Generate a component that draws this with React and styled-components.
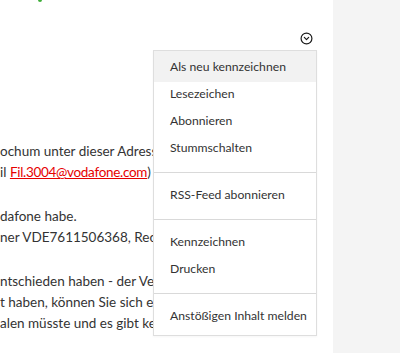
import React from "react";
import styled, { createGlobalStyle } from "styled-components";
import { CircleChevronDown } from "lucide-react";

const GlobalStyle = createGlobalStyle`
  html, body {
    margin: 0;
    padding: 0;
    background: #ffffff;
    font-family: Lato, "Open Sans", sans-serif;
    color: #333333;
  }
`;

const menuSections = [
  ["Als neu kennzeichnen", "Lesezeichen", "Abonnieren", "Stummschalten"],
  ["RSS-Feed abonnieren"],
  ["Kennzeichnen", "Drucken"],
  ["Anstößigen Inhalt melden"],
];

function App() {
  return (
    <Page>
      <GlobalStyle />
      <Main>
        <StatusMark />
        <Toolbar>
          <MenuAnchor>
            <IconButton aria-label="Optionen">
              <CircleChevronDown size={13} strokeWidth={2.2} />
            </IconButton>
            <Menu>
              {menuSections.map((items, i) => (
                <Section key={i} $first={i === 0} $last={i === menuSections.length - 1}>
                  {items.map((label, j) => (
                    <Item key={label} $active={i === 0 && j === 0}>
                      {label}
                    </Item>
                  ))}
                </Section>
              ))}
            </Menu>
          </MenuAnchor>
        </Toolbar>
        <Body>
          <Para>
            <Line>ochum unter dieser Adresse</Line>
            <Line>
              il <Mail href="#">Fil.3004@vodafone.com</Mail>) :
            </Line>
          </Para>
          <Para>
            <Line>dafone habe.</Line>
            <Line>ner VDE7611506368, Rechn</Line>
          </Para>
          <Para>
            <Line>ntschieden haben - der Vertr</Line>
            <Line>t haben, können Sie sich ein</Line>
            <Line>alen müsste und es gibt kein</Line>
          </Para>
        </Body>
      </Main>
      <Sidebar />
    </Page>
  );
}

export default App;

const Page = styled.div`
  display: flex;
  height: 100vh;
  overflow: hidden;
`;

const Main = styled.div`
  flex: 1;
  min-width: 0;
  background: #ffffff;
`;

const Sidebar = styled.aside`
  width: 67px;
  flex-shrink: 0;
  background: #f4f4f4;
`;

const StatusMark = styled.span`
  display: block;
  width: 4px;
  height: 2px;
  margin-left: 38px;
  border-radius: 0 0 2px 2px;
  background: #3fae3a;
`;

const Toolbar = styled.div`
  display: flex;
  justify-content: flex-end;
  padding: 30px 20px 0 0;
`;

const MenuAnchor = styled.div`
  position: relative;
  z-index: 2;
`;

const IconButton = styled.button`
  display: block;
  width: 13px;
  height: 13px;
  padding: 0;
  border: 0;
  background: none;
  color: #1a1a1a;
  cursor: pointer;
  svg {
    display: block;
  }
`;

const Menu = styled.div`
  position: absolute;
  top: calc(100% + 5px);
  right: -4px;
  width: 164px;
  box-sizing: border-box;
  background: #ffffff;
  border: 1px solid #dedede;
  box-shadow: 0 1px 2px rgba(0, 0, 0, 0.04);
`;

const Section = styled.div`
  padding: ${(p) => (p.$first ? "0" : "10px")} 0 ${(p) => (p.$last ? "4px" : "9px")};
  & + & {
    border-top: 1px solid #d9d9d9;
  }
`;

const Item = styled.div`
  box-sizing: border-box;
  height: ${(p) => (p.$active ? "31px" : "27px")};
  line-height: 24px;
  padding: ${(p) => (p.$active ? "4px" : "0")} 0 0 16px;
  background: ${(p) => (p.$active ? "#f2f2f2" : "transparent")};
  font-size: 12.2px;
  color: #333333;
  white-space: nowrap;
  cursor: pointer;
`;

const Body = styled.div`
  padding-top: 96px;
`;

const Para = styled.p`
  margin: 0 0 23px;
`;

const Line = styled.span`
  display: block;
  height: 21px;
  line-height: 21px;
  font-size: 13.5px;
  color: #333333;
  white-space: nowrap;
`;

const Mail = styled.a`
  color: #e60000;
  text-decoration: underline;
  letter-spacing: -0.3px;
`;
